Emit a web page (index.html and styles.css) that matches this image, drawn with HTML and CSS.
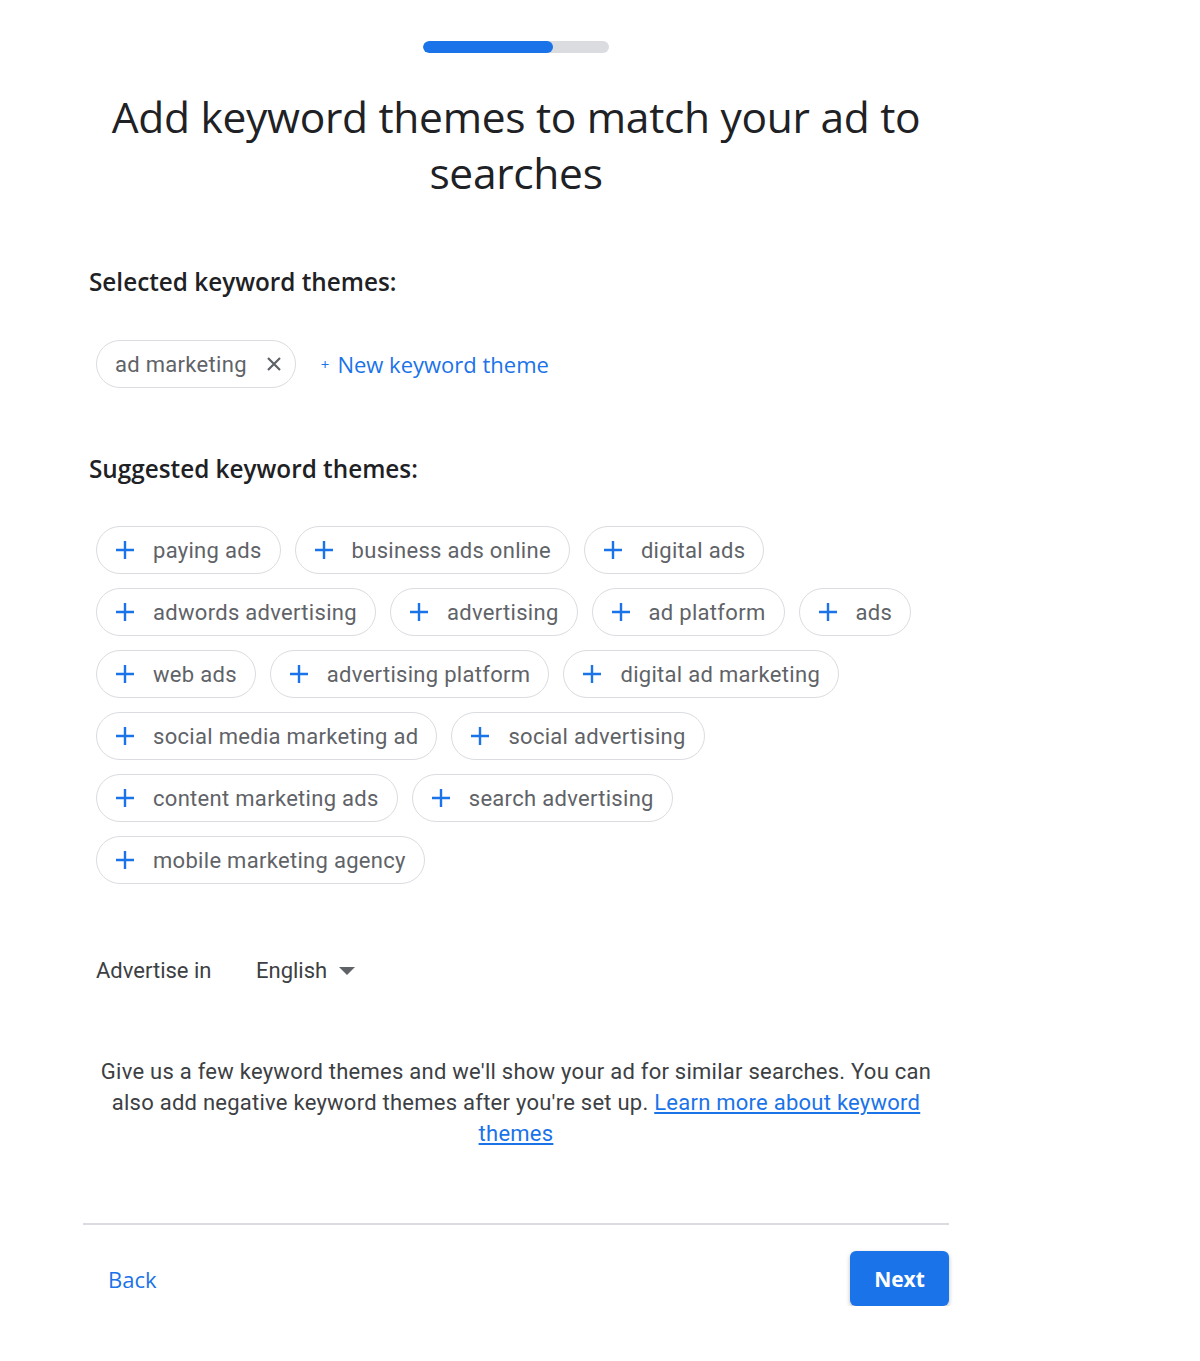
FILE: index.html
```html
<!DOCTYPE html>
<html>
<head>
<meta charset="utf-8">
<link rel="stylesheet" href="styles.css">
</head>
<body>
<div class="page">
  <div class="progress"><div class="progress-fill"></div></div>
  <h1 class="title">Add keyword themes to match your ad to searches</h1>

  <h2 class="section-label selected-label">Selected keyword themes:</h2>
  <div class="selected-row">
    <span class="chip chip-selected">ad marketing
      <svg class="close" viewBox="0 0 16 16" width="16" height="16"><path d="M2 2 L14 14 M14 2 L2 14" stroke="#5f6368" stroke-width="2.2" fill="none"/></svg>
    </span>
    <a class="new-theme"><span class="small-plus">+</span>New keyword theme</a>
  </div>

  <h2 class="section-label suggested-label">Suggested keyword themes:</h2>
  <div class="chips">
    <div class="chip-row">
      <span class="chip"><svg class="plus" viewBox="0 0 20 20"><path d="M10 1v18M1 10h18" stroke="#1a73e8" stroke-width="2.4"/></svg>paying ads</span>
      <span class="chip"><svg class="plus" viewBox="0 0 20 20"><path d="M10 1v18M1 10h18" stroke="#1a73e8" stroke-width="2.4"/></svg>business ads online</span>
      <span class="chip"><svg class="plus" viewBox="0 0 20 20"><path d="M10 1v18M1 10h18" stroke="#1a73e8" stroke-width="2.4"/></svg>digital ads</span>
    </div>
    <div class="chip-row">
      <span class="chip"><svg class="plus" viewBox="0 0 20 20"><path d="M10 1v18M1 10h18" stroke="#1a73e8" stroke-width="2.4"/></svg>adwords advertising</span>
      <span class="chip"><svg class="plus" viewBox="0 0 20 20"><path d="M10 1v18M1 10h18" stroke="#1a73e8" stroke-width="2.4"/></svg>advertising</span>
      <span class="chip"><svg class="plus" viewBox="0 0 20 20"><path d="M10 1v18M1 10h18" stroke="#1a73e8" stroke-width="2.4"/></svg>ad platform</span>
      <span class="chip"><svg class="plus" viewBox="0 0 20 20"><path d="M10 1v18M1 10h18" stroke="#1a73e8" stroke-width="2.4"/></svg>ads</span>
    </div>
    <div class="chip-row">
      <span class="chip"><svg class="plus" viewBox="0 0 20 20"><path d="M10 1v18M1 10h18" stroke="#1a73e8" stroke-width="2.4"/></svg>web ads</span>
      <span class="chip"><svg class="plus" viewBox="0 0 20 20"><path d="M10 1v18M1 10h18" stroke="#1a73e8" stroke-width="2.4"/></svg>advertising platform</span>
      <span class="chip"><svg class="plus" viewBox="0 0 20 20"><path d="M10 1v18M1 10h18" stroke="#1a73e8" stroke-width="2.4"/></svg>digital ad marketing</span>
    </div>
    <div class="chip-row">
      <span class="chip"><svg class="plus" viewBox="0 0 20 20"><path d="M10 1v18M1 10h18" stroke="#1a73e8" stroke-width="2.4"/></svg>social media marketing ad</span>
      <span class="chip"><svg class="plus" viewBox="0 0 20 20"><path d="M10 1v18M1 10h18" stroke="#1a73e8" stroke-width="2.4"/></svg>social advertising</span>
    </div>
    <div class="chip-row">
      <span class="chip"><svg class="plus" viewBox="0 0 20 20"><path d="M10 1v18M1 10h18" stroke="#1a73e8" stroke-width="2.4"/></svg>content marketing ads</span>
      <span class="chip"><svg class="plus" viewBox="0 0 20 20"><path d="M10 1v18M1 10h18" stroke="#1a73e8" stroke-width="2.4"/></svg>search advertising</span>
    </div>
    <div class="chip-row">
      <span class="chip"><svg class="plus" viewBox="0 0 20 20"><path d="M10 1v18M1 10h18" stroke="#1a73e8" stroke-width="2.4"/></svg>mobile marketing agency</span>
    </div>
  </div>

  <div class="language">
    <span class="lang-label">Advertise in</span>
    <span class="lang-select">English<svg class="caret" viewBox="0 0 10 5" width="16" height="8"><path d="M0 0h10L5 5z" fill="#5f6368"/></svg></span>
  </div>

  <p class="help">Give us a few keyword themes and we'll show your ad for similar searches. You can also add negative keyword themes after you're set up. <a class="help-link">Learn more about keyword themes</a></p>

  <div class="footer">
    <a class="back">Back</a>
    <button class="next">Next</button>
  </div>
</div>
</body>
</html>
```

FILE: styles.css
```css
* { box-sizing: border-box; }
body {
  margin: 0;
  background: #ffffff;
  font-family: Roboto, "Liberation Sans", Arial, sans-serif;
  color: #3c4043;
}
.page {
  margin-left: 83px;
  width: 866px;
  padding-top: 41px;
  display: flex;
  flex-direction: column;
}
.progress {
  align-self: center;
  width: 186px;
  height: 12px;
  border-radius: 6px;
  background: #dadce0;
  overflow: hidden;
}
.progress-fill {
  width: 130px;
  height: 12px;
  border-radius: 6px;
  background: #1a73e8;
}
.title {
  margin: 36px 0 0;
  padding: 0 20px;
  text-align: center;
  font-family: "Open Sans", Roboto, sans-serif;
  font-weight: 400;
  font-size: 42.5px;
  line-height: 56px;
  color: #202124;
  letter-spacing: -0.3px;
}
.section-label {
  margin: 0;
  padding-left: 6px;
  font-family: "Open Sans", Roboto, sans-serif;
  font-size: 24.3px;
  font-weight: 600;
  line-height: 30px;
  color: #202124;
}
.selected-label { margin-top: 66px; }
.selected-row {
  margin-top: 43px;
  padding-left: 13px;
  display: flex;
  align-items: center;
  gap: 25px;
}
.chip {
  display: inline-flex;
  align-items: center;
  height: 48px;
  border: 1.5px solid #dadce0;
  border-radius: 24px;
  padding: 0 18px 0 18px;
  font-size: 22px;
  letter-spacing: 0.3px;
  color: #5f6368;
  white-space: nowrap;
}
.chip-selected {
  height: 48px;
  padding: 0 13px 0 18px;
  gap: 19px;
}
.close { display: block; }
.new-theme {
  color: #1a73e8;
  font-family: "Open Sans", Roboto, sans-serif;
  font-size: 22px;
  font-weight: 500;
  display: inline-flex;
  align-items: center;
}
.small-plus {
  font-size: 15px;
  margin-right: 8px;
}
.suggested-label { margin-top: 66px; }
.chips {
  margin-top: 42px;
  padding-left: 13px;
  display: flex;
  flex-direction: column;
  gap: 14px;
}
.chip-row {
  display: flex;
  gap: 14px;
}
.plus {
  width: 20px;
  height: 20px;
  margin-right: 18px;
  flex: none;
}
.language {
  margin-top: 74px;
  padding-left: 13px;
  display: flex;
  align-items: center;
  font-size: 22px;
  color: #3c4043;
}
.lang-label { width: 160px; }
.lang-select {
  display: inline-flex;
  align-items: center;
  gap: 12px;
}
.caret { display: block; }
.help {
  margin: 73px 0 0;
  padding: 0 14px 0 14px;
  text-align: center;
  font-size: 22px;
  letter-spacing: 0.25px;
  line-height: 31px;
  color: #3c4043;
}
.help-link {
  color: #1a73e8;
  text-decoration: underline;
}
.footer {
  margin-top: 74px;
  border-top: 2px solid #dadce0;
  padding-top: 26px;
  display: flex;
  justify-content: space-between;
  align-items: center;
}
.back {
  margin-left: 25px;
  color: #1a73e8;
  font-family: "Open Sans", Roboto, sans-serif;
  font-size: 22px;
  font-weight: 500;
}
.next {
  width: 99px;
  height: 55px;
  border: none;
  border-radius: 6px;
  background: #1a73e8;
  color: #ffffff;
  font-family: "Open Sans", Roboto, sans-serif;
  font-size: 21px;
  font-weight: 700;
  box-shadow: 0 2px 4px rgba(60, 64, 67, 0.35);
}
```
